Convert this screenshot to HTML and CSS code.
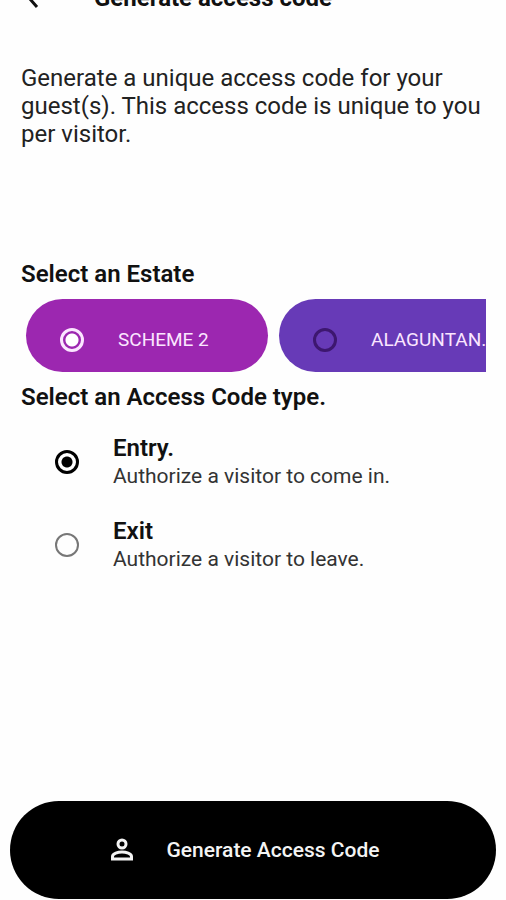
FILE: index.html
```html
<!DOCTYPE html>
<html lang="en">
<head>
<meta charset="utf-8">
<meta name="viewport" content="width=device-width, initial-scale=1">
<title>Generate access code</title>
<link rel="stylesheet" href="styles.css">
</head>
<body>
<form class="screen">
  <header class="app-bar">
    <button class="back" type="button" aria-label="Back">
      <svg viewBox="0 0 24 24" width="24" height="24" fill="none" stroke="currentColor" stroke-width="3"><path d="M17 0 8 11l7 8"/></svg>
    </button>
    <h1 class="title">Generate access code</h1>
  </header>
  <main class="content">
    <p class="intro">Generate a unique access code for your guest(s). This access code is unique to you per visitor.</p>
    <h2 class="heading" id="estate-heading">Select an Estate</h2>
    <div class="estates" role="radiogroup" aria-labelledby="estate-heading">
      <label class="estate estate-purple">
        <input class="radio" type="radio" name="estate" checked>
        <span>SCHEME 2</span>
      </label>
      <label class="estate estate-indigo">
        <input class="radio" type="radio" name="estate">
        <span>ALAGUNTAN.</span>
      </label>
    </div>
    <h2 class="heading" id="type-heading">Select an Access Code type.</h2>
    <div class="types" role="radiogroup" aria-labelledby="type-heading">
      <label class="type">
        <input class="radio" type="radio" name="type" checked>
        <span class="type-text"><strong class="type-name">Entry.</strong><span class="type-note">Authorize a visitor to come in.</span></span>
      </label>
      <label class="type">
        <input class="radio" type="radio" name="type">
        <span class="type-text"><strong class="type-name">Exit</strong><span class="type-note">Authorize a visitor to leave.</span></span>
      </label>
    </div>
  </main>
  <footer class="footer">
    <button class="submit" type="button">
      <svg viewBox="0 0 24 24" width="24" height="24" fill="none" stroke="currentColor" stroke-width="3"><circle cx="12" cy="6" r="4"/><path d="M2.500 21v-2.500c0-3 5.500-4.500 9.500-4.500s9.500 1.500 9.500 4.500v2.500z"/></svg>
      <span>Generate Access Code</span>
    </button>
  </footer>
</form>
</body>
</html>
```
FILE: styles.css
```css
* {
  box-sizing: border-box;
}

body {
  margin: 0;
  background: #fefefe;
  color: #111;
  font-family: Roboto, "Liberation Sans", sans-serif;
}

h1, h2, p {
  margin: 0;
}

button {
  border: 0;
  font: inherit;
  cursor: pointer;
}

.screen {
  display: flex;
  flex-direction: column;
  min-height: 100vh;
}

.app-bar {
  display: flex;
  align-items: flex-end;
  gap: 48px;
  height: 12px;
  padding-left: 22px;
  overflow: hidden;
}

.back {
  display: flex;
  padding: 0;
  background: none;
  color: #111;
}

.title {
  font-size: 24px;
  font-weight: 700;
  line-height: 28px;
}

.content {
  flex: 1;
  padding: 52px 20px 0 21px;
}

.intro {
  min-height: 195px;
  color: #222;
  font-size: 24px;
  line-height: 28px;
}

.heading {
  font-size: 24px;
  font-weight: 600;
  line-height: 30px;
}

.estates {
  display: flex;
  gap: 11px;
  margin: 10px 0;
  padding-left: 5px;
  overflow: hidden;
}

.estate {
  display: flex;
  flex: 0 0 242px;
  align-items: center;
  gap: 34px;
  height: 73px;
  padding: 8px 0 0 34px;
  border-radius: 37px;
  color: #fbe6ff;
  font-size: 19px;
}

.estate-purple {
  background: #9c27b0;
}

.estate-indigo {
  background: #673ab7;
}

.radio {
  flex: none;
  width: 24px;
  height: 24px;
  margin: 0;
  border: 2px solid #777;
  border-radius: 50%;
  appearance: none;
}

.radio:checked {
  border: 3px solid #000;
  background: radial-gradient(circle, #000 5px, transparent 6px);
}

.estate .radio {
  border: 3px solid #3d176f;
}

.estate .radio:checked {
  border-color: #fbe6ff;
  background: radial-gradient(circle, #fff 6px, transparent 7px);
}

.types {
  display: grid;
  gap: 28px;
  padding: 22px 0 0 34px;
}

.type {
  display: flex;
  align-items: center;
  gap: 34px;
}

.type-text {
  display: grid;
}

.type-name {
  font-size: 24px;
  font-weight: 600;
  line-height: 29px;
}

.type-note {
  color: #333;
  font-size: 21px;
  line-height: 26px;
}

.footer {
  padding: 0 10px 1px;
}

.submit {
  display: flex;
  align-items: center;
  justify-content: center;
  gap: 33px;
  width: 100%;
  height: 98px;
  padding: 0 17px 0 0;
  border-radius: 49px;
  background: #000;
  color: #f4f4f4;
  font-size: 21px;
  font-weight: 500;
}
```
